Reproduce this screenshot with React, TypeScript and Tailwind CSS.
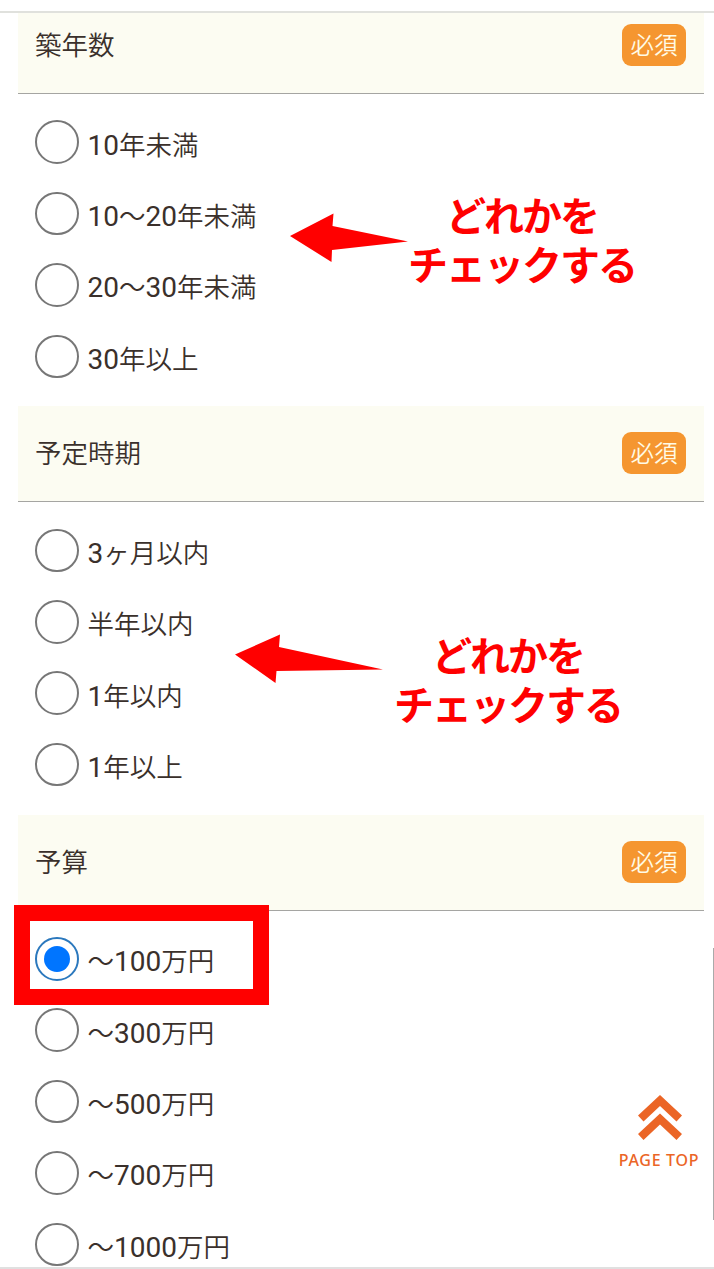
import { useState } from "react";
import clsx from "clsx";

type Question = {
  name: string;
  title: string;
  options: string[];
};

const questions: Question[] = [
  {
    name: "age",
    title: "築年数",
    options: ["10年未満", "10～20年未満", "20～30年未満", "30年以上"],
  },
  {
    name: "timing",
    title: "予定時期",
    options: ["3ヶ月以内", "半年以内", "1年以内", "1年以上"],
  },
  {
    name: "budget",
    title: "予算",
    options: ["～100万円", "～300万円", "～500万円", "～700万円", "～1000万円"],
  },
];

// Digits are set a little larger than the kanji around them
function Label({ text }: { text: string }) {
  return (
    <span className="pt-[7px] pl-[9px] text-[26.5px] leading-[40px]">
      {text.split(/(\d+)/).map((part, i) => (
        <span key={i} className={/^\d+$/.test(part) ? "text-[28px]" : "font-[350]"}>
          {part}
        </span>
      ))}
    </span>
  );
}

function RadioRow({
  name,
  text,
  checked,
  onSelect,
}: {
  name: string;
  text: string;
  checked: boolean;
  onSelect: () => void;
}) {
  return (
    <label className="flex h-[71.4px] cursor-pointer items-center">
      <input type="radio" name={name} checked={checked} onChange={onSelect} className="sr-only" />
      <span
        className={clsx(
          "flex size-[43.5px] shrink-0 items-center justify-center rounded-full border-2",
          checked ? "border-[#2b78bd]" : "border-[#777777]"
        )}
      >
        {checked && <span className="size-[26px] rounded-full bg-[#0075ff]" />}
      </span>
      <Label text={text} />
    </label>
  );
}

function QuestionBlock({ question, initial }: { question: Question; initial?: string }) {
  const [value, setValue] = useState(initial);

  return (
    <section className="mr-[10px] ml-[18px] pb-[14.4px]">
      <div className="flex h-24 items-center justify-between border-b border-[#a5a5a2] bg-[#fcfcf2] pr-[18px] pb-px pl-[17px]">
        <h2 className="pt-[2px] text-[26.5px] leading-[40px] font-[350]">{question.title}</h2>
        <span className="flex h-[42px] w-16 items-center justify-center rounded-[9px] bg-[#f59630] pt-[3px] text-[23.5px] font-[350] text-[#fffbe6]">
          必須
        </span>
      </div>
      <div className="pt-[12.4px] pl-[17px]">
        {question.options.map((option) => (
          <RadioRow
            key={option}
            name={question.name}
            text={option}
            checked={value === option}
            onSelect={() => setValue(option)}
          />
        ))}
      </div>
    </section>
  );
}

function Note({ className }: { className: string }) {
  return (
    <p
      className={clsx(
        "absolute w-[240px] text-center text-[40px] leading-[49px] font-bold tracking-[-2px] whitespace-nowrap text-[#ff0000]",
        className
      )}
    >
      どれかを
      <br />
      チェックする
    </p>
  );
}

export default function App() {
  return (
    <main className="relative flex h-[1269px] w-[714px] flex-col overflow-hidden bg-white pt-[11px] font-[Roboto,'Noto_Sans_CJK_JP',sans-serif] text-[#3a302b]">
      <div className="h-0.5 shrink-0 bg-[#e0e1dd]" />
      <div className="min-h-0 flex-1 overflow-hidden">
        <div className="-mt-[15px]">
          {questions.map((q) => (
            <QuestionBlock
              key={q.name}
              question={q}
              initial={q.name === "budget" ? "～100万円" : undefined}
            />
          ))}
        </div>
      </div>
      <div className="h-0.5 shrink-0 bg-[#e0e0e0]" />

      {/* annotations */}
      <svg className="absolute top-[213px] left-[290px]" width="119" height="50" viewBox="0 0 119 50" fill="#ff0000">
        <path d="M0 23 43.5 .5 42.5 13 118 28.5 42 37 41.5 49Z" />
      </svg>
      <Note className="top-[193px] left-[402px]" />
      <svg className="absolute top-[634px] left-[235px]" width="149" height="50" viewBox="0 0 149 50" fill="#ff0000">
        <path d="M0 20.5 45 .5 44 13 148 35.5 41.5 37 40.5 49Z" />
      </svg>
      <Note className="top-[633px] left-[388px]" />
      <div className="absolute top-[905px] left-[14px] h-[100px] w-[255px] border-[16px] border-[#ff0000]" />

      <a href="#" className="absolute top-[1095px] left-[610px] flex w-[100px] flex-col items-center text-[#eb6526]">
        <svg width="44" height="46" viewBox="0 0 44 46" fill="currentColor">
          <path d="M22 0 44 20.5 38.5 26.5 22 11 5.5 26.5 0 20.5ZM22 18.5 44 39 38.5 45 22 29.5 5.5 45 0 39Z" />
        </svg>
        <span className="mt-[7px] -ml-[2px] font-['Noto_Sans'] text-[16px] leading-[24px] font-medium tracking-[0.7px] whitespace-nowrap">
          PAGE TOP
        </span>
      </a>

      {/* scroll thumb */}
      <div className="absolute top-[948px] right-0 h-[272px] w-px bg-[#aaaaaa]" />
    </main>
  );
}
